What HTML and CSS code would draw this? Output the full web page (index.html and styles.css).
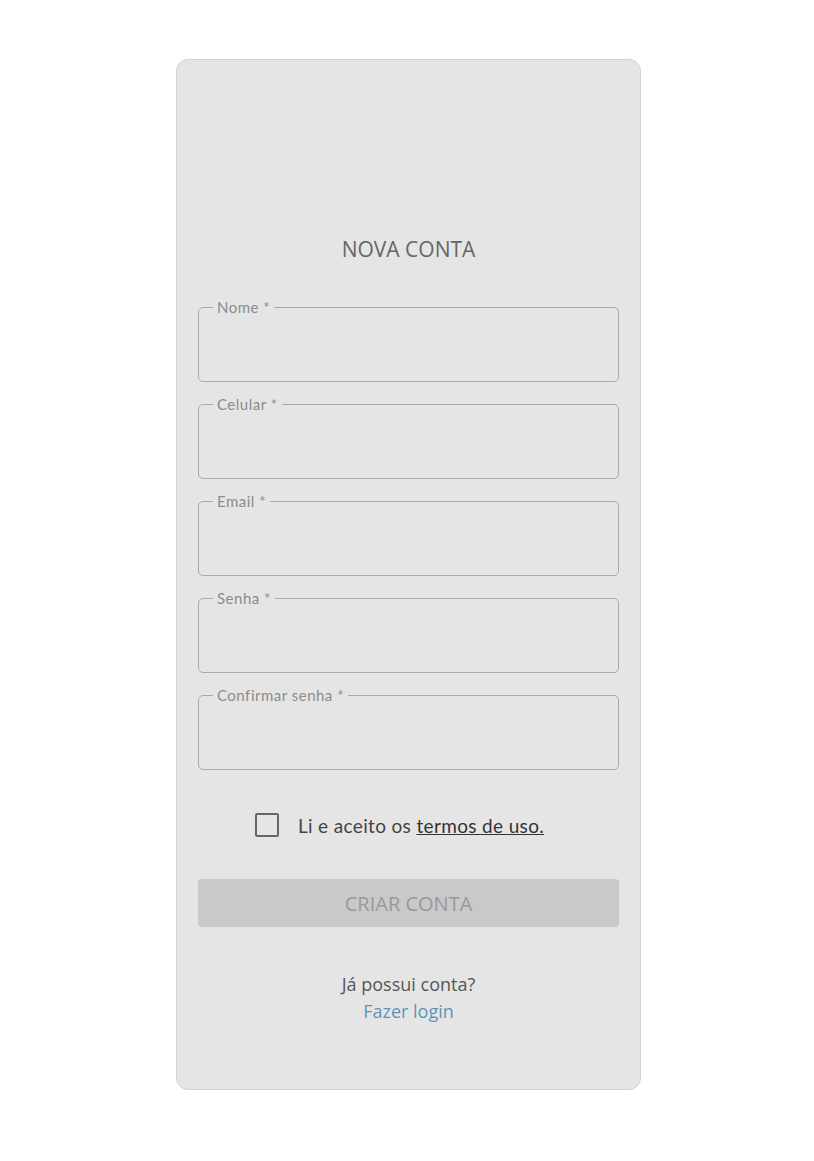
FILE: index.html
```html
<!DOCTYPE html>
<html lang="pt-BR">
<head>
    <meta charset="UTF-8">
    <meta name="viewport" content="width=device-width, initial-scale=1.0">
    <title>Nova conta</title>
    <link rel="stylesheet" href="styles.css">
</head>
<body>

<div class="card">
    <h2 class="title">NOVA CONTA</h2>
    <form class="signup">
        <fieldset class="field">
            <legend>Nome *</legend>
            <input type="text" name="nome">
        </fieldset>
        <fieldset class="field">
            <legend>Celular *</legend>
            <input type="tel" name="celular">
        </fieldset>
        <fieldset class="field">
            <legend>Email *</legend>
            <input type="email" name="email">
        </fieldset>
        <fieldset class="field">
            <legend>Senha *</legend>
            <input type="password" name="senha">
        </fieldset>
        <fieldset class="field">
            <legend>Confirmar senha *</legend>
            <input type="password" name="confirmar">
        </fieldset>

        <label class="terms">
            <span class="box"></span>
            <span>Li e aceito os <a href="#">termos de uso.</a></span>
        </label>

        <button type="submit" class="submit" disabled>CRIAR CONTA</button>
    </form>

    <div class="login">
        <p>Já possui conta?</p>
        <a href="#">Fazer login</a>
    </div>
</div>

</body>
</html>
```

FILE: styles.css
```css
body {
    margin: 0;
    padding-left: 3px;
    background: #fff;
    font-family: "Open Sans", Arial, sans-serif;
}
.card {
    width: 421px;
    margin: 59px auto 0;
    padding: 177px 21px 64px;
    background: #e5e5e5;
    border: 1px solid #d2d2d2;
    border-radius: 12px;
}
.title {
    margin: 0 0 38px;
    font-size: 21px;
    line-height: 24px;
    font-weight: 400;
    text-align: center;
    color: #666;
}
.signup {
    display: flex;
    flex-direction: column;
    gap: 14px;
}
.field {
    margin: 0;
    padding: 0 10px 0 14px;
    height: 83px;
    box-sizing: border-box;
    border: 1px solid #a9a9a9;
    border-radius: 5px;
    display: flex;
}
.field legend {
    padding: 0 4px;
    font-family: Lato, "Open Sans", sans-serif;
    font-size: 15px;
    letter-spacing: 0.5px;
    line-height: 16px;
    color: #8c8c8c;
}
.field input {
    flex: 1;
    border: none;
    background: transparent;
    outline: none;
    font-size: 16px;
}
.terms {
    display: flex;
    align-items: center;
    justify-content: center;
    gap: 19px;
    margin: 29px 0 28px;
    height: 24px;
    font-family: Lato, "Open Sans", sans-serif;
    font-size: 19px;
    letter-spacing: 0.35px;
    color: #444;
    padding-right: 18px;
}
.terms .box {
    width: 20px;
    height: 20px;
    border: 2px solid #666;
    border-radius: 2px;
}
.terms a {
    color: #333;
    text-decoration: underline;
}
.submit {
    height: 48px;
    border: none;
    border-radius: 4px;
    background: #c9c9c9;
    color: #999;
    font-family: "Open Sans", Arial, sans-serif;
    font-size: 20px;
}
.login {
    margin-top: 44px;
    text-align: center;
    font-size: 18px;
    line-height: 27px;
}
.login p {
    margin: 0;
    color: #555;
}
.login a {
    color: #5b96b6;
    text-decoration: none;
}
```
